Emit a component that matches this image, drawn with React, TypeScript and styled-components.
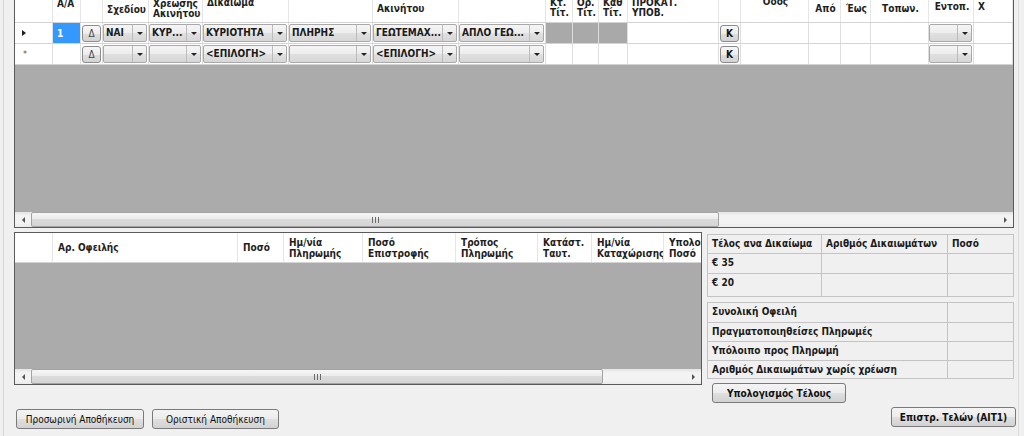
import React from "react";
import styled, { createGlobalStyle } from "styled-components";

const GlobalStyle = createGlobalStyle`
    html, body {
        margin: 0;
        padding: 0;
        background: #f0f0f0;
    }
    body {
        font-family: "DejaVu Sans Condensed", "DejaVu Sans", "Noto Sans", sans-serif;
        font-size: 10px;
        color: #1b1b1b;
    }
`

const top_cols = '38px 28px 22px 46px 54px 86px 84px 86px 87px 27px 26px 29px 91px 22px 68px 32px 30px 58px 45px 39px'
const debt_cols = '38px 185px 46px 79px 93px 82px 54px 72px 90px'

const Shell = styled.div`
    box-sizing: border-box;
    width: 1016px;
    height: 436px;
    margin-left: 3px;
    padding: 0 4px 0 10px;
    border-left: 1px solid #d6d6d6;
    border-right: 1px solid #dcdcdc;
    overflow: hidden;
    display: flex;
    flex-direction: column;
`

const DataGrid = styled.div<{ $height: number, $open_top?: boolean }>`
    box-sizing: border-box;
    flex: none;
    height: ${ p => p.$height }px;
    border: 1px solid #5a5a5a;
    ${ p => p.$open_top && 'border-top: none;' }
    display: flex;
    flex-direction: column;
    overflow: hidden;
    background: #ababab;
`

const GridRow = styled.div<{ $cols: string, $height: number }>`
    flex: none;
    display: grid;
    grid-template-columns: ${ p => p.$cols };
    height: ${ p => p.$height }px;
    background: #fff;
    border-bottom: 1px solid #d4d4d4;
`

const GreyArea = styled.div`
    flex: 1;
`

const HeadCell = styled.div<{ $center?: boolean, $middle?: boolean }>`
    box-sizing: border-box;
    min-width: 0;
    overflow: hidden;
    padding: 0 2px 0 4px;
    border-right: 1px solid #e6e6e6;
    text-align: ${ p => p.$center ? 'center' : 'left' };
    ${ p => p.$middle && 'display: flex; align-items: center; padding-left: 5px;' }
`

const HeadText = styled.div<{ $top?: number, $lh?: number }>`
    margin-top: ${ p => p.$top ?? 0 }px;
    font-weight: bold;
    line-height: ${ p => p.$lh ?? 10 }px;
    white-space: nowrap;
    color: #1e1e1e;
`

const Cell = styled.div<{ $fill?: string }>`
    box-sizing: border-box;
    min-width: 0;
    overflow: hidden;
    display: flex;
    align-items: center;
    border-right: 1px solid #dedede;
    background: ${ p => p.$fill || 'transparent' };
`

const SelectedText = styled.span`
    padding-left: 4px;
    color: #fff;
    font-weight: bold;
`

const RowArrow = styled.span`
    margin-left: 7px;
    border-top: 3px solid transparent;
    border-bottom: 3px solid transparent;
    border-left: 4px solid #1e1e1e;
`

const RowStar = styled.span`
    margin-left: 8px;
    font-size: 9px;
    color: #555;
`

const Combo = styled.div`
    box-sizing: border-box;
    flex: 1;
    min-width: 0;
    height: 18px;
    margin: 0 1px 0 0;
    display: flex;
    border: 1px solid #a9a9a9;
    border-radius: 2px;
    background: linear-gradient(#f5f5f5, #ededed 50%, #e0e0e0 51%, #d7d7d7);
    overflow: hidden;
`

const ComboText = styled.span`
    flex: 1;
    min-width: 0;
    padding-left: 2px;
    font-weight: bold;
    line-height: 16px;
    white-space: nowrap;
    overflow: hidden;
    color: #1a1a1a;
`

const ComboArrow = styled.span`
    flex: none;
    width: 13px;
    border-left: 1px solid #bcbcbc;
    display: flex;
    align-items: center;
    justify-content: center;
    &::after {
        content: '';
        border-left: 3px solid transparent;
        border-right: 3px solid transparent;
        border-top: 3px solid #222;
    }
`

const CellButton = styled.div<{ $bold?: boolean }>`
    box-sizing: border-box;
    width: 19px;
    height: 17px;
    margin: 0 auto;
    display: flex;
    align-items: center;
    justify-content: center;
    border: 1px solid #8c8c8c;
    border-radius: 3px;
    background: linear-gradient(#f7f7f7, #ececec 50%, #dedede 51%, #d3d3d3);
    font-weight: ${ p => p.$bold ? 'bold' : 'normal' };
    color: ${ p => p.$bold ? '#111' : '#444' };
`

const HScroll = styled.div<{ $height: number }>`
    flex: none;
    display: flex;
    height: ${ p => p.$height }px;
    background: linear-gradient(#e4e4e4, #f3f3f3 25%, #f3f3f3 75%, #e9e9e9);
`

const ScrollArrow = styled.div<{ $dir: 'left' | 'right' }>`
    flex: none;
    width: 16px;
    display: flex;
    align-items: center;
    justify-content: center;
    &::after {
        content: '';
        border-top: 3px solid transparent;
        border-bottom: 3px solid transparent;
        ${ p => p.$dir == 'left' ? 'border-right: 3px solid #555;' : 'border-left: 3px solid #555;' }
    }
`

const ScrollTrack = styled.div`
    flex: 1;
    display: flex;
`

const ScrollThumb = styled.div<{ $width: number }>`
    box-sizing: border-box;
    width: ${ p => p.$width }px;
    display: flex;
    align-items: center;
    justify-content: center;
    border: 1px solid #a3a3a3;
    border-radius: 2px;
    background: linear-gradient(#f6f6f6, #ebebeb 45%, #dbdbdb 50%, #d4d4d4);
`

const Grip = styled.span`
    width: 7px;
    height: 6px;
    background: repeating-linear-gradient(90deg, #6a6a6a 0 1px, transparent 1px 3px);
`

const Lower = styled.div`
    display: flex;
    align-items: flex-start;
    gap: 5px;
`

const LeftColumn = styled.div`
    width: 688px;
    flex: none;
    display: flex;
    flex-direction: column;
    margin-top: 4px;
`

const RightColumn = styled.div`
    width: 307px;
    flex: none;
    display: flex;
    flex-direction: column;
    margin-top: 6px;
`

const InfoTable = styled.div<{ $cols: string, $top?: number }>`
    display: grid;
    grid-template-columns: ${ p => p.$cols };
    margin-top: ${ p => p.$top ?? 0 }px;
    border-top: 1px solid #c4c4c4;
    border-left: 1px solid #c4c4c4;
`

const InfoCell = styled.div<{ $height: number }>`
    box-sizing: border-box;
    height: ${ p => p.$height }px;
    padding: 3px 0 0 4px;
    border-right: 1px solid #c4c4c4;
    border-bottom: 1px solid #c4c4c4;
    font-weight: bold;
    line-height: 11px;
    white-space: nowrap;
    overflow: hidden;
    color: #1a1a1a;
`

const ButtonBar = styled.div`
    display: flex;
    gap: 8px;
    margin: 24px 0 0 2px;
`

const WinButton = styled.button<{ $width: number, $bold?: boolean }>`
    box-sizing: border-box;
    width: ${ p => p.$width }px;
    height: 20px;
    padding: 0;
    border: 1px solid #7a7a7a;
    border-radius: 3px;
    background: linear-gradient(#f4f4f4, #ececec 50%, #dfdfdf 51%, #d2d2d2);
    font-family: inherit;
    font-size: 10px;
    font-weight: ${ p => p.$bold ? 'bold' : 'normal' };
    color: #111;
    white-space: nowrap;
`

const CalcButton = styled(WinButton)`
    margin: 4px 0 0 5px;
`

const ReturnButton = styled(WinButton)`
    align-self: flex-end;
    margin: 4px -2px 0 0;
`

type Head = { lines?: string[], top?: number, center?: boolean }

const top_heads: Head[] = [
    {},
    { lines: ['A/A'], top: -1 },
    {},
    { lines: ['Σχεδίου'], top: 5 },
    { lines: ['Χρεωσης', 'Ακινήτου'], top: -1 },
    { lines: ['Δικαιωμα'], top: -2 },
    {},
    { lines: ['Ακινήτου'], top: 4 },
    {},
    { lines: ['Κτ.', 'Τίτ.'], top: -2 },
    { lines: ['Ορ.', 'Τίτ.'], top: -2 },
    { lines: ['Καθ', 'Τίτ.'], top: -2 },
    { lines: ['ΠΡΟΚΑΤ.', 'ΥΠΟΒ.'], top: -2 },
    {},
    { lines: ['Οδος'], top: -3, center: true },
    { lines: ['Από'], top: 4, center: true },
    { lines: ['Έως'], top: 4, center: true },
    { lines: ['Τοπων.'], top: 4, center: true },
    { lines: ['Εντοπ.'], top: 2, center: true },
    { lines: ['X'], top: 2 },
]

const debt_heads: string[][] = [
    [],
    ['Αρ. Οφειλής'],
    ['Ποσό'],
    ['Ημ/νία', 'Πληρωμής'],
    ['Ποσό', 'Επιστροφής'],
    ['Τρόπος', 'Πληρωμής'],
    ['Κατάστ.', 'Ταυτ.'],
    ['Ημ/νία', 'Καταχώρισης'],
    ['Υπολοιπο', 'Ποσό'],
]

const lines = (items: string[]) => items.map((line, i) => (
    <React.Fragment key={ i }>{ i > 0 && <br/> }{ line }</React.Fragment>
))

const ComboBox = ({ value }: { value: string }) => (
    <Combo>
        <ComboText>{ value }</ComboText>
        <ComboArrow/>
    </Combo>
)

const Scrollbar = ({ thumb, height }: { thumb: number, height: number }) => (
    <HScroll $height={ height }>
        <ScrollArrow $dir="left"/>
        <ScrollTrack>
            <ScrollThumb $width={ thumb }><Grip/></ScrollThumb>
        </ScrollTrack>
        <ScrollArrow $dir="right"/>
    </HScroll>
)

type Entry = { current: boolean, aa: string, combos: string[] }

const entries: Entry[] = [
    { current: true, aa: '1', combos: ['ΝΑΙ', 'ΚΥΡ...', 'ΚΥΡΙΟΤΗΤΑ', 'ΠΛΗΡΗΣ', 'ΓΕΩΤΕΜΑΧ...', 'ΑΠΛΟ ΓΕΩ...'] },
    { current: false, aa: '', combos: ['', '', '<ΕΠΙΛΟΓΗ>', '', '<ΕΠΙΛΟΓΗ>', ''] },
]

const EntryRow = ({ entry }: { entry: Entry }) => (
    <GridRow $cols={ top_cols } $height={ 20 }>
        <Cell>{ entry.current ? <RowArrow/> : <RowStar>*</RowStar> }</Cell>
        <Cell $fill={ entry.current ? '#3399ff' : undefined }>
            { entry.aa && <SelectedText>{ entry.aa }</SelectedText> }
        </Cell>
        <Cell><CellButton>Δ</CellButton></Cell>
        { entry.combos.map((value, i) => (
            <Cell key={ i }><ComboBox value={ value }/></Cell>
        )) }
        <Cell $fill={ entry.current ? '#a9a9a9' : undefined }/>
        <Cell $fill={ entry.current ? '#a9a9a9' : undefined }/>
        <Cell $fill={ entry.current ? '#a9a9a9' : undefined }/>
        <Cell/>
        <Cell><CellButton $bold>K</CellButton></Cell>
        <Cell/>
        <Cell/>
        <Cell/>
        <Cell/>
        <Cell><ComboBox value=""/></Cell>
        <Cell/>
    </GridRow>
)

export default function App () {
    return (
        <>
            <GlobalStyle/>
            <Shell>
                <DataGrid $height={ 228 } $open_top>
                    <GridRow $cols={ top_cols } $height={ 22 }>
                        { top_heads.map((head, i) => (
                            <HeadCell key={ i } $center={ head.center }>
                                { head.lines &&
                                <HeadText $top={ head.top }>{ lines(head.lines) }</HeadText> }
                            </HeadCell>
                        )) }
                    </GridRow>
                    { entries.map((entry, i) => <EntryRow key={ i } entry={ entry }/>) }
                    <GreyArea/>
                    <Scrollbar thumb={ 688 } height={ 15 }/>
                </DataGrid>
                <Lower>
                    <LeftColumn>
                        <DataGrid $height={ 153 }>
                            <GridRow $cols={ debt_cols } $height={ 29 }>
                                { debt_heads.map((head, i) => (
                                    <HeadCell key={ i } $middle>
                                        <HeadText $lh={ 11 }>{ lines(head) }</HeadText>
                                    </HeadCell>
                                )) }
                            </GridRow>
                            <GreyArea/>
                            <Scrollbar thumb={ 572 } height={ 15 }/>
                        </DataGrid>
                        <ButtonBar>
                            <WinButton $width={ 128 }>Προσωρινή Αποθήκευση</WinButton>
                            <WinButton $width={ 127 }>Οριστική Αποθήκευση</WinButton>
                        </ButtonBar>
                    </LeftColumn>
                    <RightColumn>
                        <InfoTable $cols="114px 126px 66px">
                            <InfoCell $height={ 19 }>Τέλος ανα Δικαίωμα</InfoCell>
                            <InfoCell $height={ 19 }>Αριθμός Δικαιωμάτων</InfoCell>
                            <InfoCell $height={ 19 }>Ποσό</InfoCell>
                            <InfoCell $height={ 20 }>€ 35</InfoCell>
                            <InfoCell $height={ 20 }/>
                            <InfoCell $height={ 20 }/>
                            <InfoCell $height={ 23 }>€ 20</InfoCell>
                            <InfoCell $height={ 23 }/>
                            <InfoCell $height={ 23 }/>
                        </InfoTable>
                        <InfoTable $cols="240px 66px" $top={ 5 }>
                            <InfoCell $height={ 20 }>Συνολική Οφειλή</InfoCell>
                            <InfoCell $height={ 20 }/>
                            <InfoCell $height={ 19 }>Πραγματοποιηθείσες Πληρωμές</InfoCell>
                            <InfoCell $height={ 19 }/>
                            <InfoCell $height={ 19 }>Υπόλοιπο προς Πληρωμή</InfoCell>
                            <InfoCell $height={ 19 }/>
                            <InfoCell $height={ 18 }>Αριθμός Δικαιωμάτων χωρίς χρέωση</InfoCell>
                            <InfoCell $height={ 18 }/>
                        </InfoTable>
                        <CalcButton $width={ 134 } $bold>Υπολογισμός Τέλους</CalcButton>
                        <ReturnButton $width={ 125 } $bold>Επιστρ. Τελών (AIT1)</ReturnButton>
                    </RightColumn>
                </Lower>
            </Shell>
        </>
    )
}
